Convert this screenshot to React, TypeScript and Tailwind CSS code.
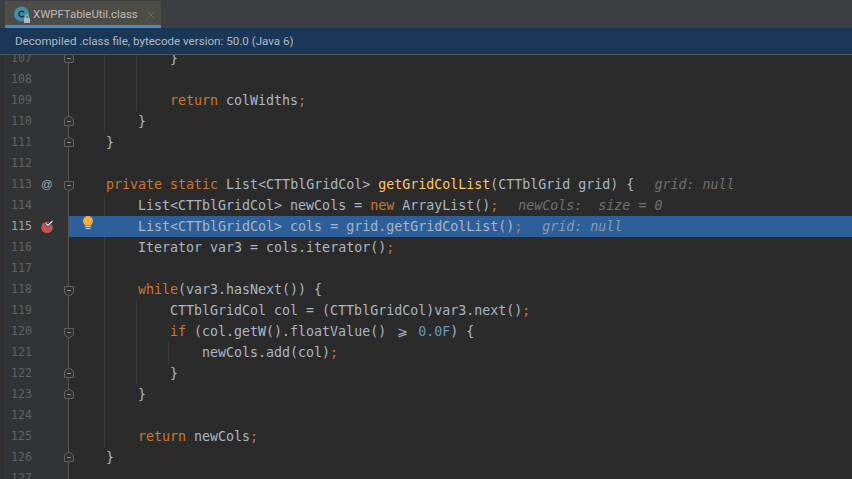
import { X } from "lucide-react";

type Seg = [string, string?];

const kw = "text-[#cc7832]";
const fn = "text-[#ffc66d]";
const num = "text-[#6897bb]";
const hint = "text-[#6e7174] italic ml-[20px]";

const lines: { n: number; indent?: number; code?: Seg[]; fold?: "start" | "end" }[] = [
  { n: 107, indent: 2, code: [["}"]], fold: "end" },
  { n: 108 },
  { n: 109, indent: 2, code: [["return", kw], [" colWidths"], [";", kw]] },
  { n: 110, indent: 1, code: [["}"]], fold: "end" },
  { n: 111, code: [["}"]], fold: "end" },
  { n: 112 },
  {
    n: 113,
    code: [
      ["private static", kw],
      [" List<CTTblGridCol> "],
      ["getGridColList", fn],
      ["(CTTblGrid grid) {"],
      ["grid: null", hint],
    ],
    fold: "start",
  },
  {
    n: 114,
    indent: 1,
    code: [
      ["List<CTTblGridCol> newCols = "],
      ["new", kw],
      [" ArrayList()"],
      [";", kw],
      ["newCols:  size = 0", hint],
    ],
  },
  {
    n: 115,
    indent: 1,
    code: [["List<CTTblGridCol> cols = grid.getGridColList()"], [";", kw], ["grid: null", "text-[#8a9bb0] italic ml-[20px]"]],
  },
  { n: 116, indent: 1, code: [["Iterator var3 = cols.iterator()"], [";", kw]] },
  { n: 117 },
  { n: 118, indent: 1, code: [["while", kw], ["(var3.hasNext()) {"]], fold: "start" },
  { n: 119, indent: 2, code: [["CTTblGridCol col = (CTTblGridCol)var3.next()"], [";", kw]] },
  {
    n: 120,
    indent: 2,
    code: [
      ["if", kw],
      [" (col.getW().floatValue() "],
      ["⩾", "inline-block w-[16px] text-center"],
      [" "],
      ["0.0F", num],
      [") {"],
    ],
    fold: "start",
  },
  { n: 121, indent: 3, code: [["newCols.add(col)"], [";", kw]] },
  { n: 122, indent: 2, code: [["}"]], fold: "end" },
  { n: 123, indent: 1, code: [["}"]], fold: "end" },
  { n: 124 },
  { n: 125, indent: 1, code: [["return", kw], [" newCols"], [";", kw]] },
  { n: 126, code: [["}"]], fold: "end" },
  { n: 127 },
];

// fold markers sit on the gutter line
const FoldMark = ({ type }: { type: "start" | "end" }) => (
  <svg width="10" height="11" viewBox="0 0 10 11" className="block">
    <path
      d={type === "start" ? "M.5.5h9v6.500l-4.500 3-4.500-3z" : "M.5 10.500h9v-6.500l-4.500-3-4.500 3z"}
      fill="#2f3031"
      stroke="#606366"
    />
    <path d={type === "start" ? "M3 4.500h4" : "M3 6.500h4"} stroke="#8a8c8e" />
  </svg>
);

const ClassIcon = () => (
  <svg width="18" height="18" viewBox="0 0 18 18" className="shrink-0">
    <circle cx="7.500" cy="8" r="7.500" fill="#3f8fa8" />
    <path d="M10 6.300a2.800 2.800 0 1 0 0 3.400" fill="none" stroke="#1f3239" strokeWidth="1.500" />
    <rect x="10" y="12" width="6" height="5" rx=".5" fill="#b4b8bb" />
    <path d="M11.300 12v-1.500a1.700 1.700 0 0 1 3.400 0V12" fill="none" stroke="#b4b8bb" />
  </svg>
);

const BreakpointIcon = () => (
  <svg width="14" height="14" viewBox="0 0 14 14">
    <circle cx="6" cy="7.500" r="5.800" fill="#c75450" />
    <path d="M5 3.500l2 2 4.500-4.500" fill="none" stroke="#2b2b2b" strokeWidth="2.600" />
    <path d="M5 3.500l2 2 4.500-4.500" fill="none" stroke="#dfe1e2" strokeWidth="1.300" />
  </svg>
);

const BulbIcon = () => (
  <svg width="12" height="15" viewBox="0 0 12 15" className="block">
    <path d="M6 0a5 5 0 0 1 5 5c0 2-1.500 3-2 4.500H3C2.500 8 1 7 1 5a5 5 0 0 1 5-5z" fill="#f4af3d" />
    <path d="M3 10.500h6M3.500 12.500h5" stroke="#c9d3de" strokeWidth="1" />
  </svg>
);

export default function App() {
  return (
    <div
      className="w-[852px] h-[479px] overflow-hidden bg-[#2b2b2b] flex flex-col text-[#a9b7c6]"
      style={{ fontFamily: "'DejaVu Sans Mono', monospace" }}
    >
      {/* tab bar */}
      <div className="h-[28px] shrink-0 bg-[#3c3f41] pl-[5px] flex pt-px">
        <div className="w-[156px] h-full bg-[#4e4c46] border-b-[3px] border-[#4a88c7] flex items-center pl-[9px] pt-[3px] gap-px font-['Roboto',sans-serif] text-[11.4px] text-[#bbbbbb]">
          <ClassIcon />
          <span>XWPFTableUtil.class</span>
          <X className="w-[14px] h-[14px] ml-[5px] text-[#6e7072] shrink-0" strokeWidth={1.3} />
        </div>
      </div>

      {/* decompiled notice */}
      <div className="h-[27px] shrink-0 bg-[#1b3757] border-b border-[#515658] flex items-center pl-[15px] pt-[2px] font-['Roboto',sans-serif] text-[11.6px] text-[#b0bac4]">
        Decompiled .class file, bytecode version: 50.0 (Java 6)
      </div>

      {/* editor */}
      <div className="flex-1 overflow-hidden relative">
        <div className="-mt-[7px] relative">
          {/* gutter background */}
          <div className="absolute left-0 top-0 bottom-0 w-[68px] bg-[#313335] border-l-[4px] border-[#2d2f31]" />
          <div className="absolute left-[68px] top-0 bottom-0 w-px bg-[#555555]" />
          {/* indent guides */}
          <div className="absolute left-[104px] top-0 h-[84px] w-px bg-[#3b3b3b]" />
          <div className="absolute left-[136px] top-0 h-[63px] w-px bg-[#3b3b3b]" />
          <div className="absolute left-[104px] top-[147px] h-[252px] w-px bg-[#3b3b3b]" />
          <div className="absolute left-[136px] top-[252px] h-[84px] w-px bg-[#3b3b3b]" />
          <div className="absolute left-[168px] top-[294px] h-[21px] w-px bg-[#3b3b3b]" />

          {lines.map((l) => {
            const current = l.n === 115;
            return (
              <div key={l.n} className="relative h-[21px] flex text-[13.3px] leading-[21px] whitespace-pre">
                <div className={`w-[68px] shrink-0 relative pl-[11px] text-[11.6px] ${current ? "text-[#a4a3a3]" : "text-[#606366]"}`}>
                  {l.n}
                  {l.n === 113 && (
                    <span className="absolute left-[41px] top-0 text-[11.5px] text-[#a9abad] font-['Liberation_Sans',sans-serif]">
                      @
                    </span>
                  )}
                  {current && (
                    <span className="absolute left-[41px] top-[4px]">
                      <BreakpointIcon />
                    </span>
                  )}
                  {l.fold && (
                    <span className={`absolute left-[64px] ${l.fold === "start" ? "top-[7px]" : "top-[4px]"}`}>
                      <FoldMark type={l.fold} />
                    </span>
                  )}
                </div>
                <div className={`flex-1 flex ml-px ${current ? "bg-[#2d5f9a]" : ""}`}>
                  <div className="w-[37px] shrink-0 flex justify-end pr-[12px]">{current && <BulbIcon />}</div>
                  <div style={{ paddingLeft: (l.indent ?? 0) * 32 }}>
                    {l.code?.map(([text, cls], i) => (
                      <span key={i} className={cls}>
                        {text}
                      </span>
                    ))}
                  </div>
                </div>
              </div>
            );
          })}
        </div>
      </div>
    </div>
  );
}
